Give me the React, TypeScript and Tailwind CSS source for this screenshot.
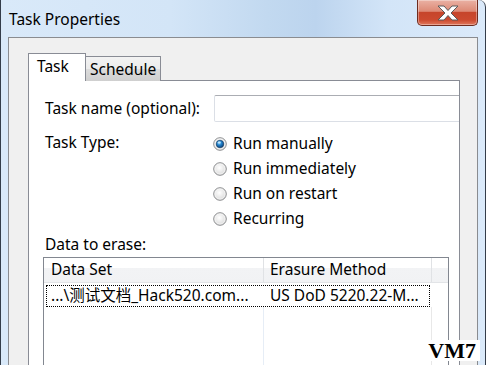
import React from 'react';

const Radio = ({ checked }: { checked?: boolean }) => (
  <svg width="14" height="14" viewBox="0 0 14 14" className="shrink-0">
    <defs>
      <radialGradient id="rbg" cx="45%" cy="40%" r="60%">
        <stop offset="0%" stopColor="#ffffff" />
        <stop offset="70%" stopColor="#e4e4e4" />
        <stop offset="100%" stopColor="#cfcfcf" />
      </radialGradient>
      <radialGradient id="rdot" cx="40%" cy="35%" r="70%">
        <stop offset="0%" stopColor="#8fd3ff" />
        <stop offset="45%" stopColor="#1f7fc9" />
        <stop offset="100%" stopColor="#0b3c73" />
      </radialGradient>
    </defs>
    <circle cx="7" cy="7" r="6.3" fill="url(#rbg)" stroke="#8d8e90" strokeWidth="1" />
    <circle cx="7" cy="7" r="5" fill="none" stroke="#f6f6f6" strokeWidth="0.8" />
    {checked && (
      <>
        <circle cx="7" cy="7" r="3.8" fill="url(#rdot)" stroke="#0e3358" strokeWidth="0.6" />
        <ellipse cx="6.2" cy="5.6" rx="1.6" ry="1" fill="#d6f0ff" opacity="0.8" />
      </>
    )}
  </svg>
);

const CloseButton = () => (
  <div className="w-[61px] h-[26px] rounded-b-[5px] border border-t-0 border-[#6e2b1f] bg-[linear-gradient(to_bottom,#eab1a4_0%,#dd8a76_45%,#c6452b_50%,#cc4a2f_80%,#e0785d_100%)] shadow-[inset_0_0_0_1px_rgba(255,255,255,0.35)] flex items-center justify-center">
    <svg width="26" height="16" viewBox="0 0 26 16">
      <path
        d="M3 1 H9 L13 5.5 L17 1 H23 L16 8 L23 15 H17 L13 10.5 L9 15 H3 L10 8 Z"
        fill="#ffffff"
        stroke="#5a5a5a"
        strokeWidth="1"
        strokeLinejoin="round"
      />
    </svg>
  </div>
);

export default function App() {
  const options = ['Run manually', 'Run immediately', 'Run on restart', 'Recurring'];

  return (
    <div className="relative w-[486px] h-[365px] overflow-hidden rounded-tr-[7px] border-l border-r border-[#343d4a] bg-[linear-gradient(to_right,#d9e9f9_0%,#d3e5f7_35%,#c2d9f0_55%,#bcd4ee_65%,#d3e5f8_80%,#dbeafa_100%)] font-['Noto_Sans','Noto_Sans_CJK_SC',sans-serif] text-black">
      {/* Title bar */}
      <div className="flex h-[37px] items-start">
        <div className="pl-[8px] pt-[8px] text-[15.5px] leading-[22px]">Task Properties</div>
        <div className="ml-auto mr-[7px]">
          <CloseButton />
        </div>
      </div>

      {/* Client area */}
      <div className="mx-[7px] h-[400px] border border-[#8a8c90] bg-[#f0f0f0] pt-[15px] pl-[19px]">
        {/* Tabs */}
        <div className="flex items-end h-[28px] text-[15.5px]">
          <div className="relative z-10 h-[28px] w-[58px] border border-b-0 border-[#898c95] bg-white pl-[8px] leading-[25px]">
            Task
          </div>
          <div className="-ml-px h-[25px] w-[76px] border border-b-0 border-[#898c95] bg-[linear-gradient(to_bottom,#f3f3f3_0%,#ebebeb_50%,#dcdcdc_51%,#cfcfcf_100%)] pl-[4px] leading-[25px]">
            Schedule
          </div>
        </div>

        {/* Panel */}
        <div className="-mt-px h-[320px] w-[432px] overflow-hidden border border-[#898c95] bg-white text-[15.5px]">
          <div className="mt-[14px] flex h-[27px] items-center">
            <div className="w-[184px] shrink-0 pl-[16px]">Task name (optional):</div>
            <div className="ml-px h-[27px] w-[280px] shrink-0 rounded-[2px] border border-[#dbdfe6] border-t-[#abadb3] bg-white" />
          </div>

          <div className="mt-[9px] flex">
            <div className="w-[184px] shrink-0 pl-[16px] leading-[23px]">Task Type:</div>
            <div className="flex flex-col">
              {options.map((o, i) => (
                <div key={o} className="flex h-[25px] items-center gap-[6px]">
                  <Radio checked={i === 0} />
                  <span>{o}</span>
                </div>
              ))}
            </div>
          </div>

          <div className="mt-[3px] pl-[16px] leading-[20px]">Data to erase:</div>

          {/* List view */}
          <div className="ml-[14px] mt-[3px] flex h-[140px] w-[406px] flex-col border border-[#828790] bg-white">
            <div className="flex h-[25px] border-b border-[#e2e4e7] bg-[linear-gradient(to_bottom,#ffffff_0%,#ffffff_40%,#f2f3f5_41%,#f1f2f4_100%)]">
              <div className="flex w-[220px] items-center border-r border-[#e0e2e5] pl-[7px]">Data Set</div>
              <div className="flex w-[168px] items-center border-r border-[#e0e2e5] pl-[6px]">Erasure Method</div>
              <div className="flex-1" />
            </div>
            <div className="ml-[2px] mt-[2px] flex h-[22px] w-[384px] items-center border border-dotted border-black">
              <div className="w-[219px] shrink-0 pl-[4px] whitespace-nowrap">...\测试文档_Hack520.com...</div>
              <div className="pl-[4px] whitespace-nowrap">US DoD 5220.22-M...</div>
            </div>
            <div className="flex flex-1">
              <div className="w-[220px] border-r border-[#e6edf6]" />
              <div className="w-[168px] border-r border-[#e8e8e8]" />
            </div>
          </div>
        </div>
      </div>

      {/* Watermark */}
      <div className="absolute right-[5px] bottom-[4px] bg-white px-[4px] font-['Liberation_Serif',serif] text-[22px] font-bold leading-[21px] text-black">
        VM7
      </div>
    </div>
  );
}
